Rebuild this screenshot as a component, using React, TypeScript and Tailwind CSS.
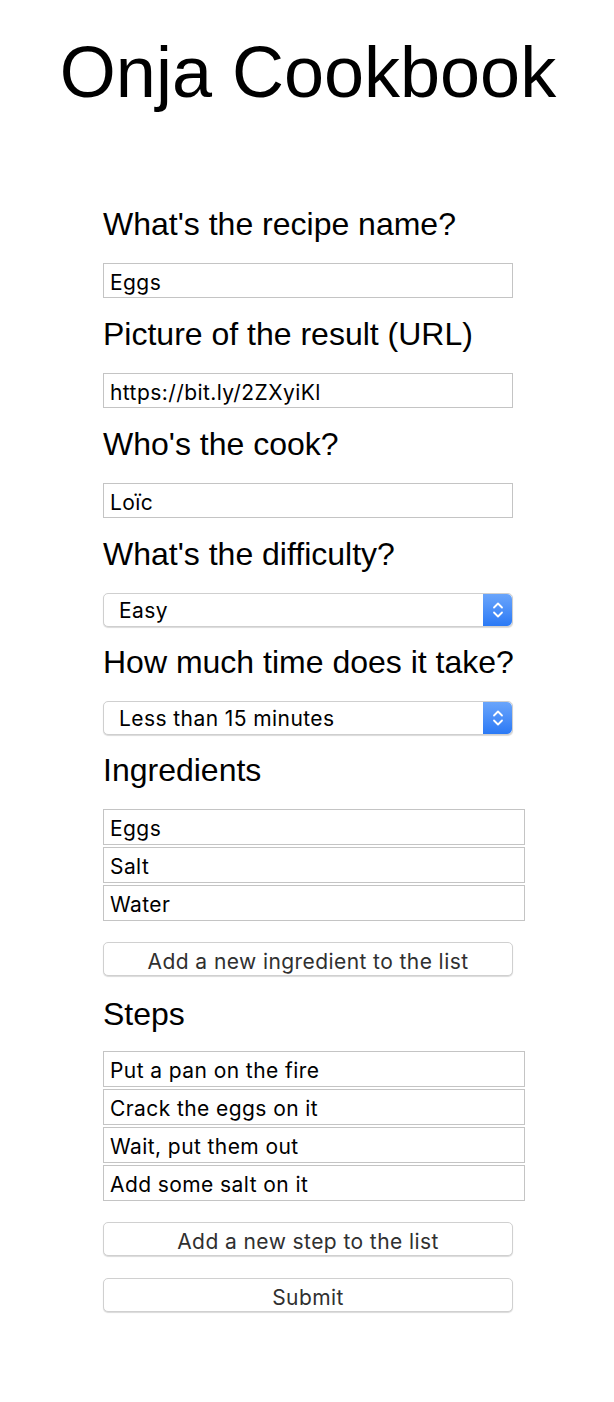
const ingredients = ["Eggs", "Salt", "Water"];
const steps = ["Put a pan on the fire", "Crack the eggs on it", "Wait, put them out", "Add some salt on it"];

const sysFont = "font-['Inter','Liberation_Sans',sans-serif] text-[21px] tracking-[0.02em]";

function Label({ children }: { children: React.ReactNode }) {
  return <h2 className="whitespace-nowrap text-[32px] leading-[37px] text-black">{children}</h2>;
}

function TextField({ value, className = "" }: { value: string; className?: string }) {
  return (
    <input
      readOnly
      value={value}
      className={`block h-[35px] w-full border border-[#c4c4c4] bg-white px-[6px] pt-[3px] text-black outline-none ${sysFont} ${className}`}
    />
  );
}

function Stepper() {
  return (
    <div className="flex h-full w-[29px] items-center justify-center rounded-r-[5px] bg-gradient-to-b from-[#6aa5fb] to-[#2a79f5]">
      <svg width="12" height="20" viewBox="0 0 12 20" fill="none" stroke="white" strokeWidth="1.8" strokeLinecap="round" strokeLinejoin="round">
        <path d="M2 7.5 6 3.5 10 7.5" />
        <path d="M2 12.5 6 16.5 10 12.5" />
      </svg>
    </div>
  );
}

function SelectField({ value }: { value: string }) {
  return (
    <div className="flex h-[34px] w-full items-stretch rounded-[5px] border border-[#cfcfcf] bg-white shadow-[0_1px_1px_rgba(0,0,0,0.15)]">
      <div className={`flex flex-1 items-center pl-[15px] pt-[2px] text-black ${sysFont}`}>{value}</div>
      <Stepper />
    </div>
  );
}

function PlainButton({ children }: { children: React.ReactNode }) {
  return (
    <button
      type="button"
      className={`block h-[34px] w-full rounded-[5px] border border-[#d0d0d0] bg-white pt-[3px] text-[#303030] shadow-[0_1px_1px_rgba(0,0,0,0.15)] ${sysFont}`}
    >
      {children}
    </button>
  );
}

export default function App() {
  return (
    <div className="min-h-[1402px] w-full bg-white font-['Liberation_Sans',Arial,sans-serif] text-black">
      <h1 className="pt-[31px] pl-[2px] text-center text-[72px] leading-[83px]">Onja Cookbook</h1>

      <form className="mt-[92px] ml-[103px] w-[410px]">
        <Label>What's the recipe name?</Label>
        <TextField value="Eggs" className="mt-[20px]" />

        <div className="mt-[18px]">
          <Label>Picture of the result (URL)</Label>
          <TextField value="https://bit.ly/2ZXyiKl" className="mt-[20px]" />
        </div>

        <div className="mt-[18px]">
          <Label>Who's the cook?</Label>
          <TextField value="Loïc" className="mt-[20px]" />
        </div>

        <div className="mt-[18px]">
          <Label>What's the difficulty?</Label>
          <div className="mt-[20px]">
            <SelectField value="Easy" />
          </div>
        </div>

        <div className="mt-[17px]">
          <Label>How much time does it take?</Label>
          <div className="mt-[20px]">
            <SelectField value="Less than 15 minutes" />
          </div>
        </div>

        <div className="mt-[17px]">
          <Label>Ingredients</Label>
          <ul className="mt-[20px] flex w-[422px] flex-col gap-[2px]">
            {ingredients.map((item) => (
              <li key={item}>
                <TextField value={item} className="h-[36px]" />
              </li>
            ))}
          </ul>
          <div className="mt-[21px]">
            <PlainButton>Add a new ingredient to the list</PlainButton>
          </div>
        </div>

        <div className="mt-[20px]">
          <Label>Steps</Label>
          <ul className="mt-[18px] flex w-[422px] flex-col gap-[2px]">
            {steps.map((step) => (
              <li key={step}>
                <TextField value={step} className="h-[36px]" />
              </li>
            ))}
          </ul>
          <div className="mt-[21px]">
            <PlainButton>Add a new step to the list</PlainButton>
          </div>
        </div>

        <div className="mt-[22px]">
          <PlainButton>Submit</PlainButton>
        </div>
      </form>
    </div>
  );
}
